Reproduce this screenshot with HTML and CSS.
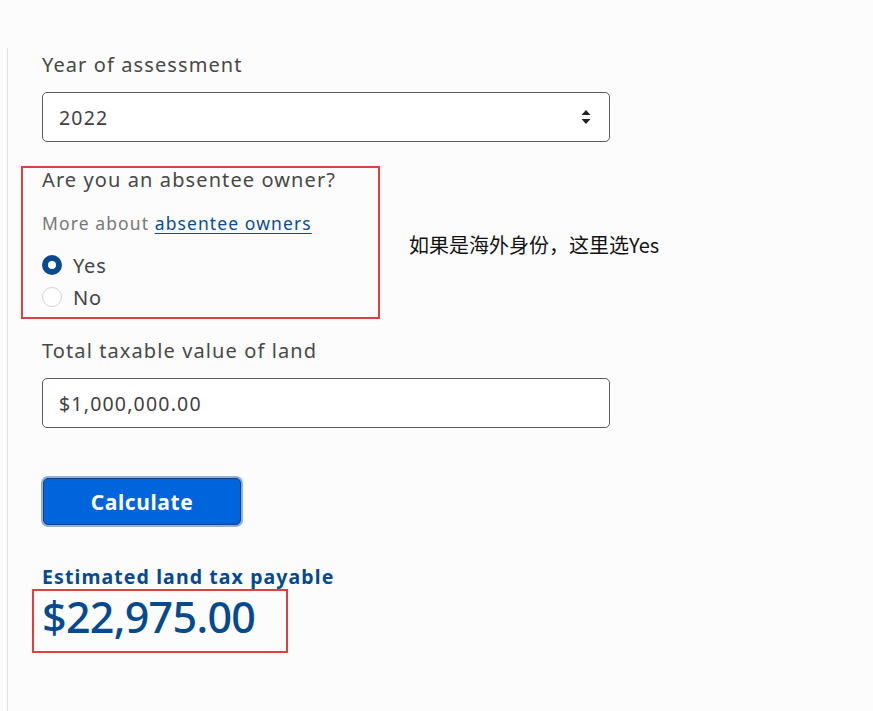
FILE: index.html
```html
<!DOCTYPE html>
<html lang="en">
<head>
<meta charset="utf-8">
<title>Land tax calculator</title>
<link rel="stylesheet" href="styles.css">
</head>
<body>
<div class="page">
  <form class="form">
    <div class="field">
      <label class="label">Year of assessment</label>
      <div class="select">
        <span class="value">2022</span>
        <svg class="arrows" width="10" height="16" viewBox="0 0 10 16"><path d="M5 1 L9.5 6 H0.5 Z M5 15 L9.5 10 H0.5 Z" fill="#222"/></svg>
      </div>
    </div>
    <div class="field question">
      <div class="label">Are you an absentee owner?</div>
      <div class="hint">More about <a href="#">absentee owners</a></div>
      <div class="radios">
        <label class="radio"><span class="dot checked"></span>Yes</label>
        <label class="radio"><span class="dot"></span>No</label>
      </div>
    </div>
    <div class="field">
      <label class="label">Total taxable value of land</label>
      <div class="input"><span class="value">$1,000,000.00</span></div>
    </div>
    <button type="button" class="btn">Calculate</button>
    <div class="result">
      <div class="result-title">Estimated land tax payable</div>
      <div class="result-value">$22,975.00</div>
    </div>
  </form>
  <div class="note-box box-question"></div>
  <div class="note-box box-result"></div>
  <div class="note">如果是海外身份，这里选Yes</div>
</div>
</body>
</html>
```

FILE: styles.css
```css
html, body {
  margin: 0;
  padding: 0;
  background: #fcfcfc;
  font-family: "Noto Sans", "Open Sans", sans-serif;
  color: #454545;
}
.page {
  position: relative;
  height: 711px;
  overflow: hidden;
}
.form {
  margin: 48px 0 0 7px;
  border-left: 1px solid #e2e2e2;
  padding: 4px 0 0 34px;
  width: 568px;
  display: flex;
  flex-direction: column;
  min-height: 700px;
}
.field {
  display: flex;
  flex-direction: column;
}
.label {
  font-size: 20px;
  line-height: 26px;
  color: #484848;
  letter-spacing: 1.1px;
}
.select, .input {
  margin-top: 14px;
  height: 48px;
  border: 1px solid #5a5a5a;
  border-radius: 5px;
  background: #fff;
  display: flex;
  align-items: center;
  justify-content: space-between;
  padding: 0 18px 0 16px;
}
.value {
  font-size: 19.5px;
  color: #3f3f3f;
  letter-spacing: 1.2px;
}
.arrows { display: block; }
.question {
  margin-top: 25px;
}
.hint {
  margin-top: 18px;
  font-size: 17.5px;
  line-height: 24px;
  color: #777;
  letter-spacing: 1.1px;
}
.hint a {
  color: #0a4c8f;
  text-decoration: underline;
  text-underline-offset: 3px;
}
.radios {
  margin-top: 14px;
  display: flex;
  flex-direction: column;
}
.radio {
  display: flex;
  align-items: center;
  height: 32px;
  font-size: 20px;
  color: #444;
  gap: 11px;
  letter-spacing: 0.8px;
}
.dot {
  width: 20px;
  height: 20px;
  box-sizing: border-box;
  border-radius: 50%;
  border: 1px solid #d4d4d4;
  background: #fff;
}
.dot.checked {
  border: 6px solid #0a4a8f;
}
.question + .field {
  margin-top: 25px;
}
.btn {
  margin-top: 50px;
  margin-left: 1px;
  align-self: flex-start;
  width: 198px;
  height: 47px;
  border-radius: 5px;
  border: 1px solid #1d3f78;
  background: #0064dc;
  box-shadow: 0 0 0 2px #8fb0d8;
  color: #fff;
  font-family: "Noto Sans", sans-serif;
  font-weight: 700;
  font-size: 21px;
  letter-spacing: 0.6px;
}
.result {
  margin-top: 39px;
  color: #064a8e;
}
.result-title {
  font-size: 19.5px;
  font-weight: 700;
  line-height: 26px;
  letter-spacing: 1.1px;
}
.result-value {
  font-size: 43px;
  font-weight: 500;
  line-height: 54px;
  letter-spacing: -0.7px;
}
.note-box {
  position: absolute;
  border: 2px solid #e53e3e;
  box-sizing: border-box;
}
.box-question {
  left: 21px;
  top: 166px;
  width: 359px;
  height: 153px;
}
.box-result {
  left: 32px;
  top: 589px;
  width: 256px;
  height: 64px;
}
.note {
  position: absolute;
  left: 409px;
  top: 233px;
  font-family: "Noto Sans CJK SC", "Noto Sans", sans-serif;
  font-size: 20px;
  line-height: 24px;
  color: #111;
}
```
